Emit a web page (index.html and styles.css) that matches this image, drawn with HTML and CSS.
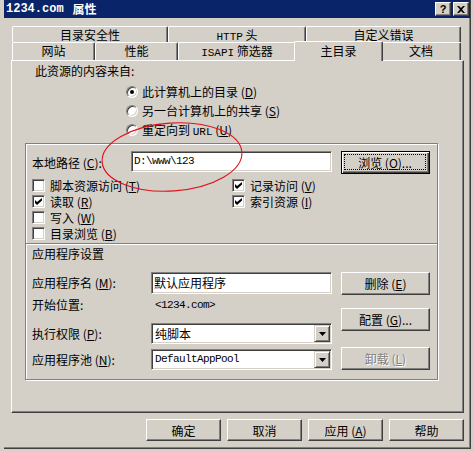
FILE: index.html
```html
<!DOCTYPE html>
<html lang="zh-CN">
<head>
<meta charset="utf-8">
<title>1234.com 属性</title>
<link rel="stylesheet" href="styles.css">
</head>
<body>
<div class="dialog">
  <div class="titlebar">
    <span class="title"><span class="title-en">1234.com</span><span class="title-cn">属性</span></span>
    <div class="tbtns">
      <span class="tbtn q">?</span>
      <span class="tbtn">
        <svg width="8" height="7" viewBox="0 0 8 7"><path d="M0 0h2l2 2 2-2h2L5 3.5 8 7H6L4 5 2 7H0l3-3.5z" fill="#000"/></svg>
      </span>
    </div>
  </div>

  <div class="tabs">
    <div class="tabrow back">
      <div class="tab t156">目录安全性</div>
      <div class="tab t138"><span class="mono">HTTP</span> 头</div>
      <div class="tab t155">自定义错误</div>
    </div>
    <div class="tabrow front">
      <div class="tab t83">网站</div>
      <div class="tab t83">性能</div>
      <div class="tab t118"><span class="mono">ISAPI</span> 筛选器</div>
      <div class="tab sel">主目录</div>
      <div class="tab t80">文档</div>
    </div>
  </div>

  <div class="panel">
    <div class="src-label">此资源的内容来自:</div>
    <div class="radios">
      <div class="radio-row"><span class="radio on"><span class="dot"></span></span><span>此计算机上的目录 (<u>D</u>)</span></div>
      <div class="radio-row"><span class="radio"></span><span>另一台计算机上的共享 (<u>S</u>)</span></div>
      <div class="radio-row"><span class="radio"></span><span>重定向到 <span class="mono">URL</span> (<u>U</u>)</span></div>
    </div>

    <div class="group">
      <div class="path-row">
        <span class="lbl w99">本地路径 (<u>C</u>):</span>
        <div class="input w201 mono-in">D:\www\123</div>
        <div class="btn default wide"><span class="focus"><span>浏览 (<u>O</u>)...</span></span></div>
      </div>

      <div class="checks">
        <div class="col-l">
          <div class="chk-row"><span class="chk"></span><span>脚本资源访问 (<u>T</u>)</span></div>
          <div class="chk-row"><span class="chk"><svg width="7" height="7" viewBox="0 0 7 7"><path d="M0 2L2 4L7 0V2.5L2 7L0 5Z" fill="#000"/></svg></span><span>读取 (<u>R</u>)</span></div>
          <div class="chk-row"><span class="chk"></span><span>写入 (<u>W</u>)</span></div>
          <div class="chk-row"><span class="chk"></span><span>目录浏览 (<u>B</u>)</span></div>
        </div>
        <div class="col-r">
          <div class="chk-row"><span class="chk"><svg width="7" height="7" viewBox="0 0 7 7"><path d="M0 2L2 4L7 0V2.5L2 7L0 5Z" fill="#000"/></svg></span><span>记录访问 (<u>V</u>)</span></div>
          <div class="chk-row"><span class="chk"><svg width="7" height="7" viewBox="0 0 7 7"><path d="M0 2L2 4L7 0V2.5L2 7L0 5Z" fill="#000"/></svg></span><span>索引资源 (<u>I</u>)</span></div>
        </div>
      </div>

      <div class="sep"></div>
      <div class="app-title">应用程序设置</div>

      <div class="app">
        <div class="app-left">
          <div class="row-a">
            <span class="lbl w119 lh22">应用程序名 (<u>M</u>):</span>
            <div class="input w181 h22">默认应用程序</div>
          </div>
          <div class="row-b">
            <span class="lbl w119 lh16">开始位置:</span>
            <span class="start-val mono-in">&lt;1234.com&gt;</span>
          </div>
          <div class="row-c">
            <span class="lbl w119 lh21">执行权限 (<u>P</u>):</span>
            <div class="select">
              <span class="select-text">纯脚本</span>
              <span class="drop"><svg width="7" height="4" viewBox="0 0 7 4"><path d="M0 0h7L3.5 4z" fill="#000"/></svg></span>
            </div>
          </div>
          <div class="row-d">
            <span class="lbl w119 lh21">应用程序池 (<u>N</u>):</span>
            <div class="select">
              <span class="select-text mono-in">DefaultAppPool</span>
              <span class="drop"><svg width="7" height="4" viewBox="0 0 7 4"><path d="M0 0h7L3.5 4z" fill="#000"/></svg></span>
            </div>
          </div>
        </div>
        <div class="app-right">
          <div class="btn wide"><span>删除 (<u>E</u>)</span></div>
          <div class="btn wide b2"><span>配置 (<u>G</u>)...</span></div>
          <div class="btn wide b3 disabled"><span>卸载 (<u>L</u>)</span></div>
        </div>
      </div>
    </div>
  </div>

  <div class="footer">
    <div class="btn foot">确定</div>
    <div class="btn foot">取消</div>
    <div class="btn foot"><span>应用 (<u>A</u>)</span></div>
    <div class="btn foot">帮助</div>
  </div>
</div>

<svg class="annot" width="160" height="85" viewBox="0 0 160 85">
  <ellipse cx="77" cy="42" rx="70" ry="34" transform="rotate(-4 77 42)" fill="none" stroke="#e0101a" stroke-width="1.1"/>
</svg>
</body>
</html>
```

FILE: styles.css
```css
html, body {
  margin: 0;
  padding: 0;
}
body {
  width: 474px;
  height: 451px;
  overflow: hidden;
  background: #d4d0c8;
  font-family: "Noto Sans CJK SC", "Noto Sans", sans-serif;
  font-size: 12px;
  color: #000;
}
u { text-decoration: underline; text-underline-offset: 1px; }

.mono { font-family: "Liberation Mono", "Noto Sans CJK SC", monospace; font-size: 11px; }
.mono-in { font-family: "Liberation Mono", "Noto Sans CJK SC", monospace; font-size: 11px; letter-spacing: -0.6px; }

.dialog {
  margin-left: 4px;
  width: 467px;
  height: 449px;
  box-sizing: border-box;
  background: #d4d0c8;
  border-right: 1px solid #404040;
  border-bottom: 1px solid #404040;
  box-shadow: inset -1px -1px 0 #808080;
  display: flex;
  flex-direction: column;
}

/* title bar */
.titlebar {
  flex: none;
  height: 18px;
  background: #0a246a;
  display: flex;
  align-items: center;
  justify-content: space-between;
  padding: 0 1px 0 2px;
}
.title {
  color: #fff;
  font-weight: bold;
  line-height: 18px;
  white-space: nowrap;
  display: flex;
}
.title-en {
  font-family: "Liberation Mono", monospace;
  font-size: 12px;
}
.title-cn { margin-left: 9px; }
.tbtns { display: flex; gap: 2px; }
.tbtn {
  width: 16px;
  height: 14px;
  box-sizing: border-box;
  background: #d4d0c8;
  border: 1px solid;
  border-color: #fff #404040 #404040 #fff;
  box-shadow: inset -1px -1px 0 #808080;
  display: flex;
  align-items: center;
  justify-content: center;
}
.tbtn.q {
  font-family: "Liberation Sans", sans-serif;
  font-weight: bold;
  font-size: 11px;
  line-height: 12px;
}

/* tabs */
.tabs {
  flex: none;
  margin-top: 8px;
  padding-left: 8px;
}
.tabrow { display: flex; align-items: flex-start; }
.tabrow.back { height: 16px; overflow: hidden; }
.tabrow.front { height: 18px; }
.tab {
  flex: none;
  box-sizing: border-box;
  height: 18px;
  border-top: 1px solid #fff;
  border-left: 1px solid #fff;
  border-right: 1px solid #404040;
  box-shadow: inset -1px 0 0 #808080;
  border-radius: 2px 2px 0 0;
  text-align: center;
  line-height: 16px;
  white-space: nowrap;
  background: #d4d0c8;
}
.tab .mono { font-size: 11px; }
.t156 { width: 156px; }
.t138 { width: 138px; }
.t155 { width: 155px; }
.t83 { width: 83px; }
.t118 { width: 118px; }
.t80 { width: 80px; }
.tab.sel {
  width: 89px;
  height: 20px;
  margin: -1px -2px 0 -2px;
  line-height: 18px;
  position: relative;
  z-index: 2;
}

/* panel */
.panel {
  flex: none;
  margin-left: 7px;
  width: 453px;
  height: 353px;
  box-sizing: border-box;
  border: 1px solid;
  border-color: #fff #404040 #404040 #fff;
  box-shadow: inset -1px -1px 0 #808080;
}
.src-label {
  margin: 3px 0 0 23px;
  line-height: 14px;
}
.radios { margin: 4px 0 0 114px; }
.radio-row {
  height: 19px;
  display: flex;
  align-items: center;
  white-space: nowrap;
}
.radio-row .mono { font-size: 11px; }
.radio {
  flex: none;
  width: 12px;
  height: 12px;
  box-sizing: border-box;
  margin-right: 4px;
  border-radius: 50%;
  background: #fff;
  border: 1px solid;
  border-color: #808080 #fff #fff #808080;
  box-shadow: inset 1px 1px 0 #404040, inset -1px -1px 0 #d4d0c8;
  display: flex;
  align-items: center;
  justify-content: center;
}
.dot {
  width: 4px;
  height: 4px;
  border-radius: 50%;
  background: #000;
}

/* group box */
.group {
  margin: 4px 0 0 13px;
  width: 413px;
  height: 237px;
  box-sizing: border-box;
  border: 1px solid #808080;
  box-shadow: 1px 1px 0 #fff, inset 1px 1px 0 #fff;
}
.path-row {
  display: flex;
  margin-top: 7px;
  padding-left: 6px;
  height: 23px;
}
.lbl { flex: none; white-space: nowrap; }
.w99 { width: 99px; line-height: 23px; }
.w119 { width: 119px; }
.lh22 { line-height: 22px; }
.lh16 { line-height: 16px; }
.lh21 { line-height: 21px; }

.input {
  flex: none;
  height: 21px;
  box-sizing: border-box;
  background: #fff;
  border: 1px solid;
  border-color: #808080 #fff #fff #808080;
  box-shadow: inset 1px 1px 0 #404040, inset -1px -1px 0 #d4d0c8;
  padding-left: 2px;
  line-height: 19px;
  white-space: nowrap;
  overflow: hidden;
}
.w201 { width: 201px; }
.w181 { width: 181px; }
.h22 { height: 22px; line-height: 20px; }

.btn {
  flex: none;
  box-sizing: border-box;
  height: 23px;
  background: #d4d0c8;
  border: 1px solid;
  border-color: #fff #404040 #404040 #fff;
  box-shadow: inset -1px -1px 0 #808080;
  display: flex;
  align-items: center;
  justify-content: center;
  white-space: nowrap;
}
.btn.wide { width: 89px; }
.path-row .btn { margin-left: 9px; }
.btn.default {
  border-color: #000;
  box-shadow: inset 1px 1px 0 #fff, inset -1px -1px 0 #404040, inset -2px -2px 0 #808080;
  padding: 2px 3px 3px 2px;
  align-items: stretch;
}
.focus {
  flex: 1;
  border: 1px dotted #000;
  display: flex;
  align-items: center;
  justify-content: center;
}
.btn.disabled {
  color: #808080;
  text-shadow: 1px 1px 0 #fff;
}

/* checkboxes */
.checks {
  display: flex;
  margin-top: 3px;
  padding-left: 6px;
}
.col-l { width: 200px; }
.chk-row {
  height: 16px;
  display: flex;
  align-items: center;
  white-space: nowrap;
}
.chk {
  flex: none;
  width: 13px;
  height: 13px;
  box-sizing: border-box;
  margin-right: 5px;
  background: #fff;
  border: 1px solid;
  border-color: #808080 #fff #fff #808080;
  box-shadow: inset 1px 1px 0 #404040, inset -1px -1px 0 #d4d0c8;
  display: flex;
  align-items: center;
  justify-content: center;
}

.sep {
  margin-top: 2px;
  border-top: 1px solid #808080;
  border-bottom: 1px solid #fff;
}
.app-title {
  margin-top: 1px;
  padding-left: 6px;
  line-height: 16px;
}

.app {
  display: flex;
  margin-top: 10px;
  padding-left: 6px;
}
.app-left { width: 300px; flex: none; }
.row-a { display: flex; height: 22px; }
.row-b { display: flex; height: 16px; margin-top: 3px; }
.row-c { display: flex; height: 21px; margin-top: 10px; }
.row-d { display: flex; height: 21px; margin-top: 5px; }
.start-val { padding-left: 4px; line-height: 16px; }

.select {
  flex: none;
  display: flex;
  width: 181px;
  height: 21px;
  box-sizing: border-box;
  background: #fff;
  border: 1px solid;
  border-color: #808080 #fff #fff #808080;
  box-shadow: inset 1px 1px 0 #404040, inset -1px -1px 0 #d4d0c8;
  padding: 1px;
}
.select-text {
  flex: 1;
  padding-left: 2px;
  line-height: 17px;
  white-space: nowrap;
  overflow: hidden;
}
.drop {
  flex: none;
  width: 16px;
  height: 17px;
  box-sizing: border-box;
  background: #d4d0c8;
  border: 1px solid;
  border-color: #d4d0c8 #404040 #404040 #d4d0c8;
  box-shadow: inset 1px 1px 0 #fff, inset -1px -1px 0 #808080;
  display: flex;
  align-items: center;
  justify-content: center;
}

.app-right { margin-left: 9px; }
.b2 { margin-top: 13px; }
.b3 { margin-top: 16px; }

/* footer */
.footer {
  flex: none;
  display: flex;
  justify-content: flex-end;
  gap: 6px;
  margin-top: 6px;
  padding-right: 6px;
}
.btn.foot { width: 75px; height: 22px; }

/* red annotation drawn over the dialog */
.annot {
  position: absolute;
  left: 95px;
  top: 115px;
  pointer-events: none;
}
```
